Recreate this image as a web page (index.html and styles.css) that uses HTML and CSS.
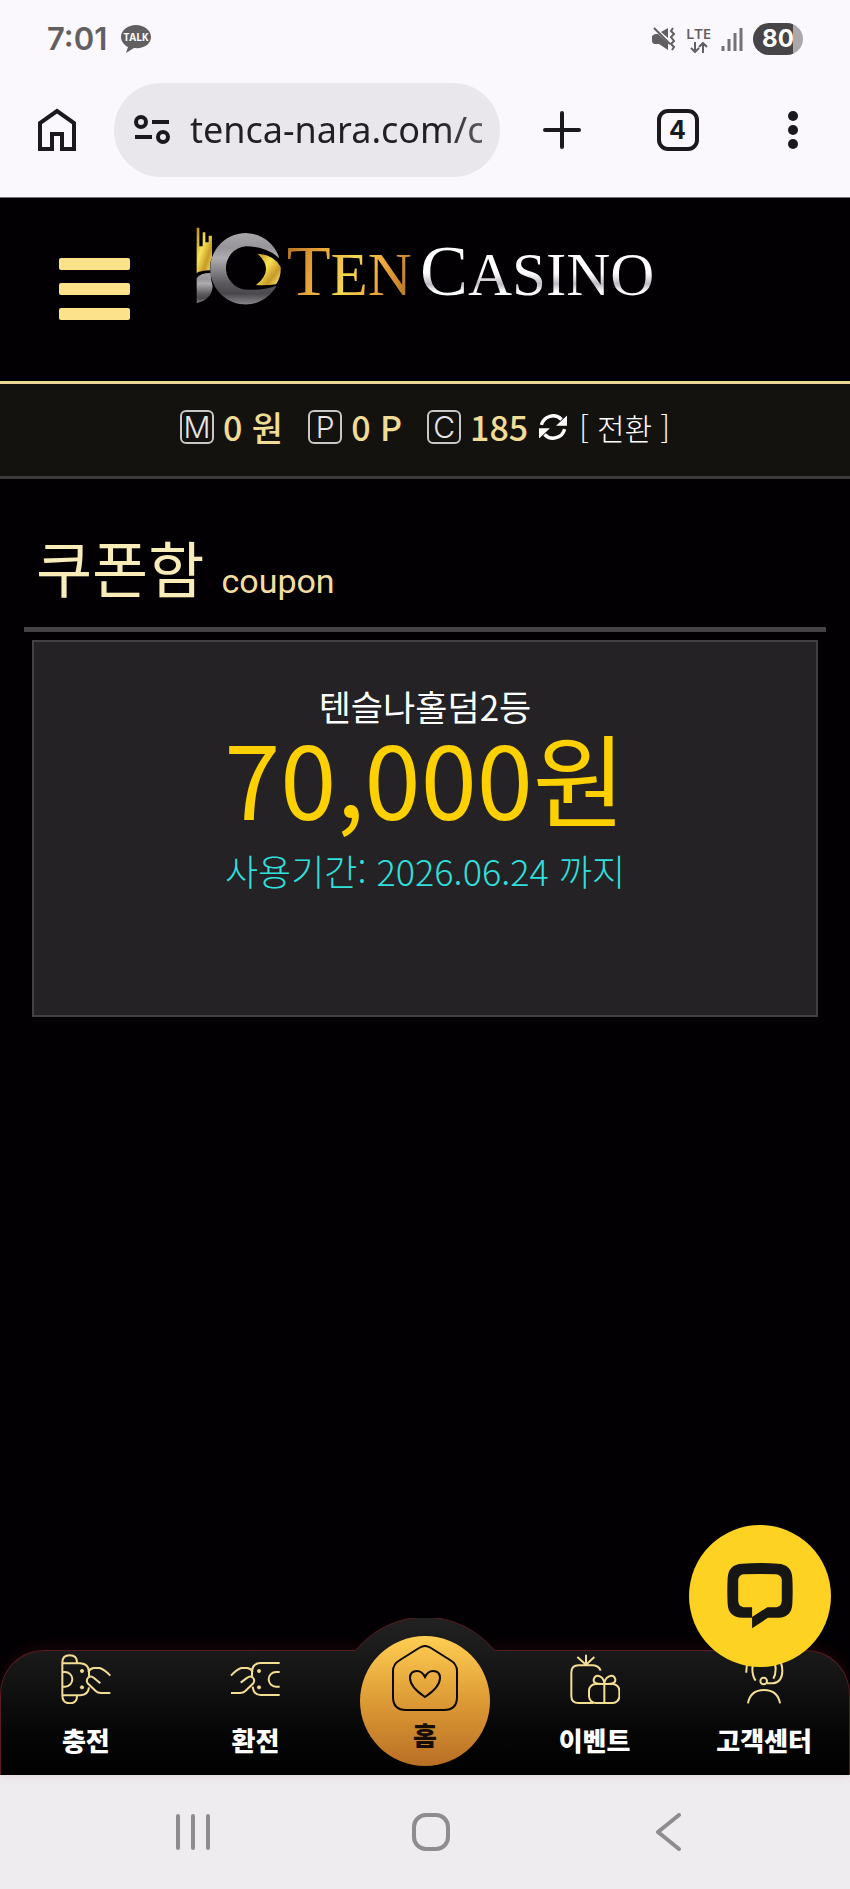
FILE: index.html
```html
<!DOCTYPE html>
<html lang="ko">
<head>
  <meta charset="UTF-8">
  <title>TEN CASINO - 쿠폰함</title>
  <meta name="viewport" content="width=device-width, initial-scale=1.0">
  <link rel="stylesheet" href="styles.css">
</head>
<body>
  <!-- phone status bar -->
  <div class="status-bar">
    <span class="clock">7:01</span>
    <svg class="talk" width="30" height="28" viewBox="0 0 30 28">
      <path d="M15 0C7 0 0 5 0 12c0 4 3 8 7 10L5 28l8-5c10 1 17-4 17-11C30 5 23 0 15 0z" fill="#625f63"/>
      <text x="15" y="16" text-anchor="middle" fill="#fff">TALK</text>
    </svg>
    <div class="status-icons">
      <svg width="24" height="24" viewBox="0 0 24 24" fill="#625f63">
        <path d="M0 9l3-2h3l10 9v7l-9-6H2l-2-2zM9 5l7-4v10z"/>
        <path d="M2 1l16 16M21 1l-2 3 3 3-3 3 3 4-3 3 3 3-2 3" fill="none" stroke="#625f63" stroke-width="2"/>
      </svg>
      <div class="lte">
        <span>LTE</span>
        <svg width="18" height="11" viewBox="0 0 18 11" fill="none" stroke="#625f63" stroke-width="2">
          <path d="M5 0v9M1 6l4 4 4-4M13 11V2M9 5l4-4 4 4"/>
        </svg>
      </div>
      <svg width="22" height="24" viewBox="0 0 22 24" stroke="#757276" stroke-width="3">
        <path d="M2 19v5M8 12v12M14 6v18M20 1v23"/>
      </svg>
      <span class="battery">80</span>
    </div>
  </div>

  <!-- browser toolbar -->
  <div class="toolbar">
    <button class="icon-btn" aria-label="Home">
      <svg width="38" height="44" viewBox="0 0 38 44" fill="none" stroke="#1a1a1e" stroke-width="4">
        <path d="M2 41V15L19 3l17 12v26H24V26H14v15z"/>
      </svg>
    </button>
    <div class="address">
      <svg width="36" height="30" viewBox="0 0 36 30" fill="none" stroke="#1a1a1e" stroke-width="4">
        <circle cx="7" cy="7" r="5"/><path d="M18 7h17M1 22h17"/><circle cx="29" cy="22" r="5"/>
      </svg>
      <input class="url" type="text" aria-label="Address" value="tenca-nara.com/coupon">
    </div>
    <div class="actions">
      <button class="icon-btn" aria-label="New tab">
        <svg width="38" height="38" viewBox="0 0 38 38" stroke="#1a1a1e" stroke-width="4" stroke-linecap="round">
          <path d="M19 2v34M2 19h34"/>
        </svg>
      </button>
      <button class="tab-count">4</button>
      <button class="icon-btn" aria-label="More">
        <svg width="38" height="38" viewBox="0 0 38 38" fill="#1a1a1e">
          <circle cx="19" cy="5" r="5"/><circle cx="19" cy="19" r="5"/><circle cx="19" cy="33" r="5"/>
        </svg>
      </button>
    </div>
  </div>

  <header class="site-header">
    <button class="menu" aria-label="메뉴"><span></span><span></span><span></span></button>
    <a class="logo" href="#">
      <svg width="85" height="78" viewBox="0 0 255 234">
        <defs>
          <linearGradient id="silver" x1="0" y1="0" x2="0" y2="1">
            <stop offset="0" stop-color="#aaa7ab"/><stop offset=".2" stop-color="#98959a"/>
            <stop offset=".35" stop-color="#b0adb1"/><stop offset=".7" stop-color="#5c5a5e"/>
            <stop offset=".85" stop-color="#4a484c"/><stop offset="1" stop-color="#88868a"/>
          </linearGradient>
          <linearGradient id="gold" x1="0" y1="0" x2="1" y2="1">
            <stop offset="0" stop-color="#b98a1c"/><stop offset=".4" stop-color="#f8e255"/>
            <stop offset=".7" stop-color="#c79a28"/><stop offset="1" stop-color="#fdf07a"/>
          </linearGradient>
        </defs>
        <path d="M2 2h8v56h10V16h8v30h10V26h10v66q-8 16-6 38-26 0-40 8z" fill="url(#gold)"/>
        <path d="M2 228v-74q10-16 42-16 0 20 6 40-4 42-48 50z" fill="url(#silver)"/>
        <path d="M250 94A106 107 0 1 0 242 176Q200 190 160 188A65 65 0 0 1 150 58Q210 58 250 94z" fill="url(#silver)"/>
        <path d="M184 80Q236 84 254 120 256 150 240 172 210 176 180 174 238 128 184 80z" fill="url(#gold)"/>
      </svg>
      <span class="logo-ten">T<small>EN</small></span>
      <span class="logo-casino">C<small>ASINO</small></span>
    </a>
  </header>

  <div class="wallet">
    <div class="balance"><span class="badge">M</span>0 원</div>
    <div class="balance"><span class="badge">P</span>0 P</div>
    <div class="balance"><span class="badge">C</span>185</div>
    <button class="convert">
      <svg width="28" height="30" viewBox="0 0 82 88" fill="#fff">
        <path d="M7 38A35 35 0 0 1 66 22M75 50A35 35 0 0 1 16 66" fill="none" stroke="#fff" stroke-width="10"/>
        <path d="M82 10v30H50zM0 78V48h32z"/>
      </svg>
      [ 전환 ]
    </button>
  </div>

  <main class="content">
    <h1 class="page-title">쿠폰함 <small>coupon</small></h1>
    <section class="coupon">
      <p class="coupon-name">텐슬나홀덤2등</p>
      <p class="coupon-amount">70,000원</p>
      <p class="coupon-date">사용기간: 2026.06.24 까지</p>
    </section>
  </main>

  <div class="bottom">
    <button class="chat" aria-label="채팅 상담">
      <svg width="66" height="66" viewBox="0 0 200 200" fill="#161614">
        <path fill-rule="evenodd" d="M46 2Q100-2 154 2 196 4 198 46 200 84 198 124 196 164 156 166H124L76 198V166H46Q4 164 2 124 0 84 2 46 4 4 46 2zM50 34Q36 36 34 50V116Q36 132 50 134H76V164L122 134H150Q164 132 166 116V50Q164 36 148 34 100 32 50 34z"/>
      </svg>
    </button>
    <nav class="tabs">
      <svg class="bump" width="138" height="34" viewBox="0 0 138 34">
        <defs>
          <linearGradient id="bumpFill" x1="0" y1="0" x2="0" y2="1">
            <stop offset="0" stop-color="#222"/><stop offset="1" stop-color="#1a1a1b"/>
          </linearGradient>
        </defs>
        <path d="M0 34V32A89 89 0 0 1 138 32V34z" fill="url(#bumpFill)"/>
        <path d="M0 32A89 89 0 0 1 138 32" fill="none" stroke="#5a1c1f"/>
      </svg>
      <a class="tab" href="#">
        <svg class="tab-icon" viewBox="0 0 150 150">
          <path d="M4 26Q4 4 26 4 48 4 48 26M4 24V126M4 124Q4 148 26 148 48 148 48 126M4 28H58Q82 30 84 52V66M4 124H58Q82 122 84 100M4 54H12A22 22 0 0 1 12 98H4"/>
          <path d="M82 54Q86 44 98 42H116Q130 46 148 65M118 88L98 71Q90 64 82 70 74 78 80 88L104 111Q110 117 120 117H148"/>
          <circle cx="63" cy="51" r="5"/><circle cx="63" cy="100" r="5"/>
        </svg>
        충전
      </a>
      <a class="tab" href="#">
        <svg class="tab-icon" viewBox="0 0 150 150">
          <path d="M149 27H92Q68 28 66 50V66M149 123H92Q70 122 68 98M149 54H138A22 22 0 0 0 138 98H149"/>
          <path d="M68 54Q64 44 52 42H34Q20 46 3 65M32 86L52 71Q60 64 68 70 76 78 70 88L46 111Q40 117 30 117H3"/>
          <circle cx="87" cy="51" r="5"/><circle cx="87" cy="100" r="5"/>
        </svg>
        환전
      </a>
      <a class="tab tab-home" href="#">
        <span class="disc">
          <svg width="66" height="66" viewBox="0 0 66 66" fill="none" stroke="#0b0805" stroke-width="2">
            <path d="M27 3Q33-1 39 3L58 15Q65 19 65 26V52Q65 65 52 65H14Q1 65 1 52V26Q1 19 8 15z"/>
            <path d="M33 52Q18 42 18 33 18 26 25 26 30 26 33 32 36 26 41 26 48 26 48 33 48 42 33 52z"/>
          </svg>
          홈
        </span>
      </a>
      <a class="tab" href="#">
        <svg class="tab-icon" viewBox="0 0 150 150">
          <path d="M92 50Q86 34 66 34H26Q4 34 4 56V126Q4 147 26 147H70M48 32V2M48 32L22 9M48 32L73 9"/>
          <rect x="57" y="90" width="91" height="57" rx="20"/>
          <path d="M103 90V146M103 90Q68 92 71 76 76 60 91 68 102 74 103 90 104 74 116 68 132 60 136 76 138 92 103 90z"/>
        </svg>
        이벤트
      </a>
      <a class="tab" href="#">
        <svg class="tab-icon" viewBox="0 0 150 150">
          <path d="M27 148Q34 108 75 108 116 108 123 148M84 88H102Q130 84 130 50 130 2 75 2 20 2 22 56M50 80Q40 66 40 44 42 16 75 16 110 16 110 44 110 62 103 74"/>
          <circle class="hollow" cx="74" cy="81" r="10"/>
        </svg>
        고객센터
      </a>
    </nav>
  </div>

  <!-- android navigation -->
  <div class="system-nav">
    <button class="icon-btn" aria-label="Recent apps">
      <svg width="38" height="38" viewBox="0 0 38 38"><path d="M4 3v32M19 3v32M34 3v32"/></svg>
    </button>
    <button class="icon-btn" aria-label="Home screen">
      <svg width="38" height="38" viewBox="0 0 38 38"><rect x="2" y="2" width="34" height="34" rx="12"/></svg>
    </button>
    <button class="icon-btn" aria-label="Back">
      <svg width="38" height="38" viewBox="0 0 38 38"><path d="M29 2L8 19l21 17"/></svg>
    </button>
  </div>
</body>
</html>
```

FILE: styles.css
```css
* {
  margin: 0; padding: 0; box-sizing: border-box;
}
body {
  display: flex; flex-direction: column; min-height: 100vh;
  background: #020003; color: #fff;
  font-family: "Noto Sans CJK KR", "Noto Sans", sans-serif;
}
button {
  background: none; border: 0; color: inherit; font-family: inherit; cursor: pointer;
}
a { color: inherit; text-decoration: none; }
svg { display: block; flex: none; }

/* phone status bar */
.status-bar {
  display: flex; align-items: center; gap: 14px;
  height: 78px; padding: 0 47px;
  background: #faf8fc; color: #625f63;
}
.clock { font: 600 31px/40px Inter, sans-serif; }
.talk text { font: 700 10px "Open Sans", sans-serif; }
.status-icons { display: flex; align-items: center; gap: 10px; margin-left: auto; }
.lte {
  display: flex; flex-direction: column; align-items: center; gap: 2px;
  font: 600 15px/14px "Open Sans", sans-serif;
}
.battery {
  width: 50px; border-radius: 16px;
  background: linear-gradient(90deg, #474548 80%, #aaa8ac 80%);
  color: #fff; font: 700 24px/32px Inter, sans-serif; text-align: center;
}

/* browser toolbar */
.toolbar {
  display: flex; align-items: center; gap: 38px;
  height: 120px; padding: 4px 38px 20px;
  background: #faf8fc; border-bottom: 1px solid #77757a;
}
.address {
  display: flex; align-items: center; gap: 20px;
  flex: 1; min-width: 0; height: 94px; padding: 0 18px 0 20px;
  background: #e9e7ec; border-radius: 47px;
}
.url {
  flex: 1; min-width: 0; border: 0; outline: 0; background: none;
  color: #1f1f24; font: 400 36px/48px "Noto Sans", sans-serif;
  -webkit-mask-image: linear-gradient(90deg, #000 85%, rgba(0, 0, 0, 0.7));
  mask-image: linear-gradient(90deg, #000 85%, rgba(0, 0, 0, 0.7));
}
.actions {
  display: flex; justify-content: space-between; align-items: center;
  width: 274px; padding-left: 5px;
}
.tab-count {
  width: 42px; height: 42px; border: 4px solid #1a1a1e; border-radius: 11px;
  color: #1a1a1e; font: 700 25px/34px Inter, sans-serif;
}

/* site header */
.site-header {
  display: grid; grid-template-columns: 1fr auto 1fr; align-items: start;
  height: 186px; padding: 29px 59px;
  border-bottom: 3px solid #e9d793;
}
.menu { display: flex; flex-direction: column; gap: 13px; width: 71px; margin-top: 31px; }
.menu span { height: 12px; border-radius: 2px; background: #fce28b; }
.logo {
  display: flex; align-items: flex-start;
  font: 72px/88px "Liberation Serif", serif;
}
.logo small { font-size: 61px; }
.logo-ten, .logo-casino {
  -webkit-background-clip: text; background-clip: text; color: transparent;
}
.logo-ten {
  margin: 0 8px 0 6px;
  background-image: linear-gradient(110deg, #a8691f 0%, #e5a038 25%, #f3d84f 50%, #f0a63b 70%, #b87b28 90%);
}
.logo-casino {
  background-image: linear-gradient(180deg, #fff 50%, #bdbac2 62%, #fff 70%);
}

/* balances */
.wallet {
  display: flex; justify-content: center; align-items: center; gap: 25px;
  height: 95px; padding-bottom: 6px;
  background: #13120f; border-bottom: 3px solid #3c3a3d;
}
.balance {
  display: flex; align-items: center; gap: 9px;
  color: #f0dc94; font-size: 34px; line-height: 40px; font-weight: 500;
}
.badge {
  width: 34px; height: 34px; border: 2px solid #c9c7c9; border-radius: 6px;
  color: #e6e4e6; font: 300 30px/30px Inter, sans-serif; text-align: center;
}
.convert {
  display: flex; align-items: center; gap: 12px; margin-left: -14px;
  font-size: 30px; line-height: 40px; font-weight: 300;
}

/* coupon page */
.content { flex: 1; padding: 48px 24px; }
.page-title {
  padding: 0 12px 20px; border-bottom: 5px solid #454346;
  font-size: 61px; line-height: 80px; font-weight: 400;
  color: #f8ecb8;
}
.page-title small { font: 400 34px/40px Roboto, sans-serif; color: #f3de9f; }
.coupon {
  min-height: 377px; margin: 8px 8px 0; padding: 40px 20px;
  background: #242224; border: 2px solid #434144; text-align: center;
}
.coupon-name { font-size: 35px; line-height: 48px; }
.coupon-amount { color: #fdd000; font-size: 101px; line-height: 92px; }
.coupon-date { margin-top: 24px; color: #2fe0de; font-size: 36px; line-height: 48px; font-weight: 300; }

/* bottom tabs, the round home tab rises out of the bar */
.bottom { position: relative; }
.tabs {
  position: relative; display: flex; height: 125px;
  background: linear-gradient(180deg, #1a1a1b, #060606 65%, #000);
  border: 1px solid #5a1c1f; border-bottom: 0; border-radius: 44px 44px 0 0;
  box-shadow: 0 -4px 14px rgba(90, 20, 25, 0.25);
}
.bump { position: absolute; top: -33px; left: 50%; transform: translateX(-50%); }
.tab {
  display: flex; flex: 1; flex-direction: column; align-items: center; gap: 18px;
  padding-top: 3px; font-size: 26px; line-height: 36px; font-weight: 900;
}
.tab-icon { width: 50px; height: 50px; fill: none; stroke: #f3dd93; stroke-width: 6; }
.tab-icon circle { fill: #f3dd93; stroke-width: 2; }
.tab-icon .hollow { fill: none; stroke-width: 6; }
.tab-home { color: #160e04; }
.disc {
  position: absolute; top: -15px;
  display: flex; flex-direction: column; align-items: center; gap: 6px;
  width: 130px; height: 130px; padding-top: 9px; border-radius: 50%;
  background: linear-gradient(180deg, #ffce53, #dd9b35 50%, #b96f25);
}
.chat {
  position: absolute; z-index: 1; right: 19px; bottom: 108px;
  display: flex; justify-content: center; align-items: center;
  width: 142px; height: 142px; border-radius: 50%;
  background: #fdd223;
}

.system-nav {
  display: flex; align-items: center;
  height: 114px; padding: 0 62px 0 74px;
  background: #efecef;
}
.system-nav button { display: flex; flex: 1; justify-content: center; }
.system-nav svg { fill: none; stroke: #8e8c8f; stroke-width: 4; stroke-linecap: round; stroke-linejoin: round; }
```
